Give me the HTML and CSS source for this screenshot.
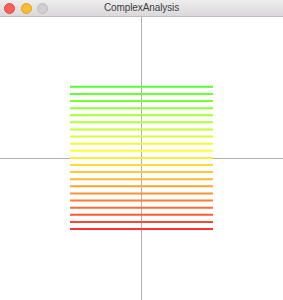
FILE: index.html
```html
<!DOCTYPE html>
<html lang="en">
<head>
    <meta charset="UTF-8">
    <meta name="viewport" content="width=device-width, initial-scale=1.0">
    <title>ComplexAnalysis</title>
    <link rel="stylesheet" href="styles.css">
</head>
<body>
    <div class="window">
        <div class="titlebar">
            <div class="lights">
                <span class="light close"></span>
                <span class="light min"></span>
                <span class="light zoom"></span>
            </div>
            <div class="title">ComplexAnalysis</div>
        </div>
        <svg class="plot" id="plot" width="283" height="283" viewBox="0 0 283 283">
            <line class="axis" x1="141.5" y1="0" x2="141.5" y2="283"></line>
            <line class="axis" x1="0" y1="141.5" x2="283" y2="141.5"></line>
        </svg>
    </div>

    <script>
        const plot = document.getElementById('plot');
        const count = 21;

        for (let i = 0; i < count; i++) {
            const y = 69.8 + i * 7.11;
            const hue = 110 - i * 5.5;
            const line = document.createElementNS('http://www.w3.org/2000/svg', 'line');
            line.setAttribute('x1', 70);
            line.setAttribute('x2', 213);
            line.setAttribute('y1', y);
            line.setAttribute('y2', y);
            line.setAttribute('stroke', 'hsl(' + hue + ', 100%, 60%)');
            line.classList.add('level');
            plot.appendChild(line);
        }
    </script>
</body>
</html>
```

FILE: styles.css
```css
body {
    margin: 0;
    background: #ffffff;
    font-family: "Liberation Sans", Arial, sans-serif;
}

.window {
    width: 283px;
    height: 300px;
    overflow: hidden;
}

.titlebar {
    position: relative;
    height: 16px;
    background: linear-gradient(to bottom, #eeedee, #dad8da);
    border-bottom: 1px solid #bdbbbd;
    display: flex;
    align-items: center;
    justify-content: center;
}

.lights {
    position: absolute;
    left: 4px;
    top: 3px;
    display: flex;
    gap: 5.5px;
}

.light {
    width: 9px;
    height: 9px;
    border-radius: 50%;
}

.light.close {
    background: #fc5f57;
    border: 0.5px solid #de4a41;
}

.light.min {
    background: #fdbc2e;
    border: 0.5px solid #dea123;
}

.light.zoom {
    background: #d0ced0;
    border: 0.5px solid #bdbbbd;
}

.title {
    font-size: 10px;
    color: #404040;
    line-height: 16px;
    letter-spacing: -0.1px;
}

.plot {
    display: block;
}

.axis {
    stroke: #b0b0b0;
    stroke-width: 1;
}

.level {
    stroke-width: 2;
}
```
